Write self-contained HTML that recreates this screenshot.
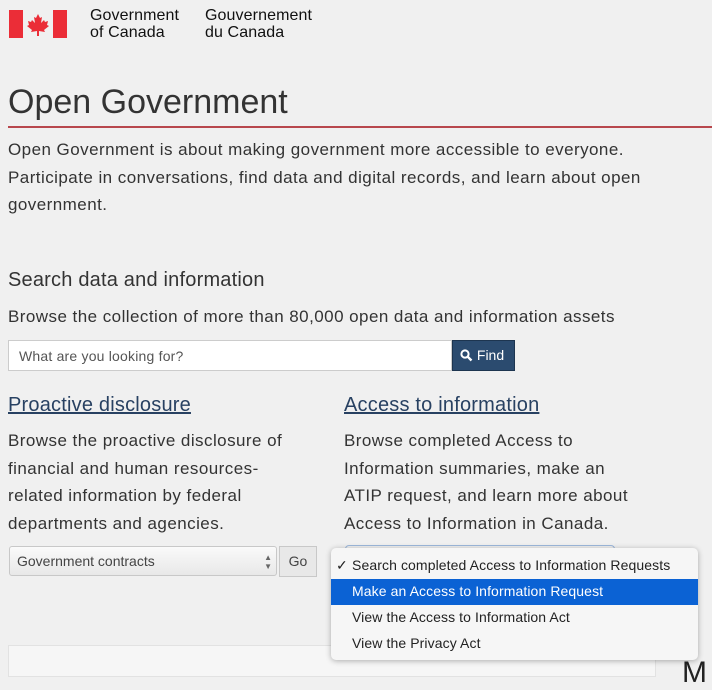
<!DOCTYPE html>
<html><head><meta charset="utf-8"><style>
body{margin:0;width:712px;height:671px;overflow:hidden;background:#f0f0f0;font-family:"Liberation Sans",sans-serif;color:#333;position:relative}
.a{position:absolute;white-space:nowrap}
.p{font-size:17px;letter-spacing:.45px;color:#333}
.lk{color:#284162;text-decoration:underline;font-size:20px;letter-spacing:.2px}
</style></head><body>
<svg class="a" style="left:9px;top:10px" width="58" height="28" viewBox="0 0 58 28">
<rect x="0" y="0" width="14" height="28" fill="#eb2d37"/><rect x="44" y="0" width="14" height="28" fill="#eb2d37"/>
<path d="M29 4 L31 8 L33 7 L32 13 L35 10 L36 12 L39 11 L38 15 L40 16 L35 20 L36 22 L30 21 L30 26 L28 26 L28 21 L22 22 L23 20 L18 16 L20 15 L19 11 L22 12 L23 10 L26 13 L25 7 L27 8 Z" fill="#eb2d37"/>
</svg>
<div class="a" style="left:90px;top:7px;font-size:16px;line-height:17px;color:#111;letter-spacing:.1px">Government<br>of Canada</div>
<div class="a" style="left:205px;top:7px;font-size:16px;line-height:17px;color:#111;letter-spacing:.1px">Gouvernement<br>du Canada</div>
<div class="a" style="left:8px;top:83px;font-size:34px;color:#333">Open Government</div>
<div class="a" style="left:8px;top:126px;width:704px;height:2px;background:#b8474d"></div>
<div class="a p" style="left:8px;top:136px;line-height:27.5px">Open Government is about making government more accessible to everyone.<br>Participate in conversations, find data and digital records, and learn about open<br>government.</div>
<div class="a" style="left:8px;top:269px;font-size:20px;color:#333;letter-spacing:.2px">Search data and information</div>
<div class="a p" style="left:8px;top:307px">Browse the collection of more than 80,000 open data and information assets</div>
<div class="a" style="left:8px;top:340px;width:444px;height:31px;background:#fff;border:1px solid #ccc;box-sizing:border-box"></div>
<div class="a" style="left:19px;top:348px;font-size:14px;color:#555;letter-spacing:.2px">What are you looking for?</div>
<div class="a" style="left:452px;top:340px;width:63px;height:31px;background:#2b4b6f;border:1px solid #1d3550;box-sizing:border-box;color:#fff;font-size:14px;line-height:29px;padding-left:7px">
<svg width="13" height="13" viewBox="0 0 13 13" style="vertical-align:-2px"><circle cx="5" cy="5" r="3.6" fill="none" stroke="#fff" stroke-width="2"/><path d="M7.8 7.8 L11.5 11.5" stroke="#fff" stroke-width="2.4"/></svg> Find</div>
<div class="a lk" style="left:8px;top:394px">Proactive disclosure</div>
<div class="a lk" style="left:344px;top:394px">Access to information</div>
<div class="a p" style="left:8px;top:427px;line-height:27.5px">Browse the proactive disclosure of<br>financial and human resources-<br>related information by federal<br>departments and agencies.</div>
<div class="a p" style="left:344px;top:427px;line-height:27.5px">Browse completed Access to<br>Information summaries, make an<br>ATIP request, and learn more about<br>Access to Information in Canada.</div>
<div class="a" style="left:9px;top:546px;width:268px;height:30px;background:linear-gradient(#fafafa,#e8e8e8);border:1px solid #c8c8c8;border-radius:3px;box-sizing:border-box;font-size:14px;line-height:28px;padding-left:7px;color:#444">Government contracts<span style="position:absolute;right:4px;top:0;font-size:8px;line-height:9px;padding-top:6px;color:#666">▲<br>▼</span></div>
<div class="a" style="left:279px;top:546px;width:38px;height:31px;background:#e8e8e8;border:1px solid #c8c8c8;box-sizing:border-box;font-size:14px;line-height:29px;text-align:center;color:#444">Go</div>
<div class="a" style="left:345px;top:545px;width:268px;height:6px;border:1px solid #9db8dc;border-bottom:none;border-radius:4px 4px 0 0"></div>
<div class="a" style="left:8px;top:645px;width:646px;height:30px;background:#f6f6f6;border:1px solid #e2e2e2"></div>
<div class="a" style="left:682px;top:656px;font-size:30px;color:#222">M</div>
<div class="a" style="left:331px;top:548px;width:367px;height:112px;background:#f6f6f6;border-radius:5px;box-shadow:0 1px 6px rgba(0,0,0,.3);font-size:14px;color:#222;letter-spacing:.1px">
<div style="position:absolute;left:5px;top:9px">✓</div>
<div style="position:absolute;left:21px;top:9px">Search completed Access to Information Requests</div>
<div style="position:absolute;left:0;top:31px;width:367px;height:26px;background:#0b62d4"></div>
<div style="position:absolute;left:21px;top:35px;color:#fff">Make an Access to Information Request</div>
<div style="position:absolute;left:21px;top:61px">View the Access to Information Act</div>
<div style="position:absolute;left:21px;top:87px">View the Privacy Act</div>
</div>
</body></html>
